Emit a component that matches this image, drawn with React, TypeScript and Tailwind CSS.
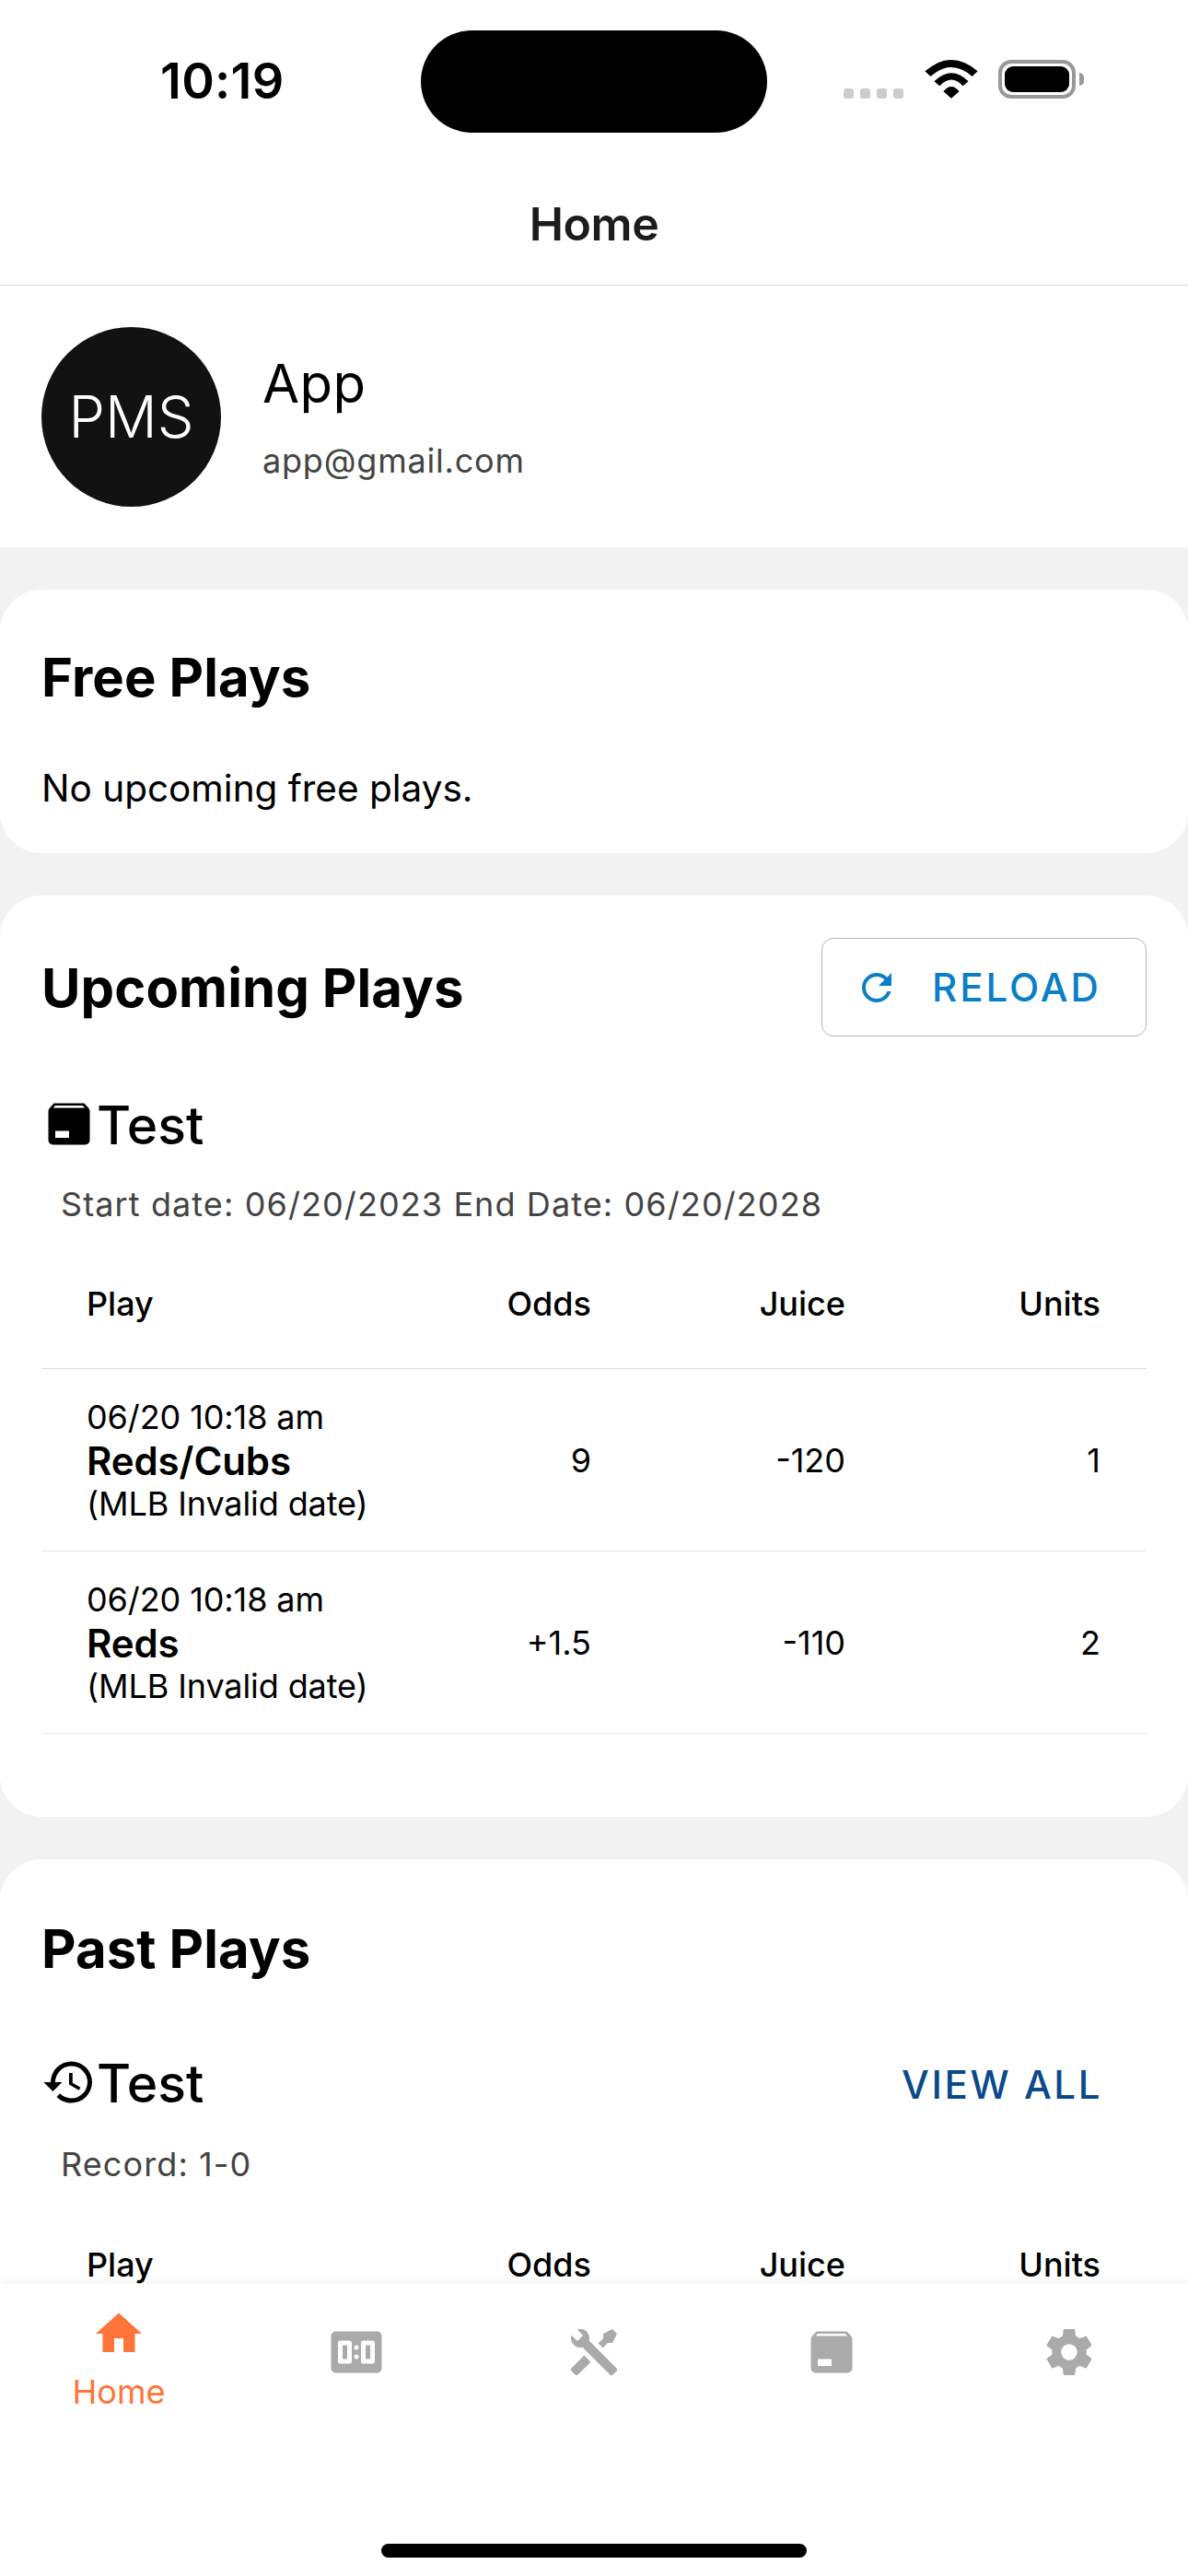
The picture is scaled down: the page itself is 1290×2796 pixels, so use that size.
import type { ReactNode } from 'react'

const FONT = "font-['Inter','Liberation_Sans',sans-serif]"

const PACKAGE_PATH =
  'M5.12,5H18.87L17.93,4H5.93L5.12,5M20.54,5.23C20.83,5.57 21,6 21,6.5V19A2,2 0 0,1 19,21H5A2,2 0 0,1 3,19V6.5C3,6 3.17,5.57 3.46,5.23L4.84,3.55C5.12,3.21 5.53,3 6,3H18C18.47,3 18.88,3.21 19.15,3.55L20.54,5.23M6,18H12V15H6V18Z'
const HISTORY_PATH =
  'M13.5,8H12V13L16.28,15.54L17,14.33L13.5,12.25V8M13,3A9,9 0 0,0 4,12H1L4.96,16.03L9,12H6A7,7 0 0,1 13,5A7,7 0 0,1 20,12A7,7 0 0,1 13,19C11.07,19 9.32,18.21 8.06,16.94L6.64,18.36C8.27,20 10.5,21 13,21A9,9 0 0,0 22,12A9,9 0 0,0 13,3'
const TOOLS_PATH =
  'M21.71 20.29L20.29 21.71A1 1 0 0 1 18.88 21.71L7 9.85A3.81 3.81 0 0 1 6 10A4 4 0 0 1 2.22 4.7L4.76 7.24L5.29 6.71L6.71 5.29L7.24 4.76L4.7 2.22A4 4 0 0 1 10 6A3.81 3.81 0 0 1 9.85 7L21.71 18.88A1 1 0 0 1 21.71 20.29M2.29 18.88A1 1 0 0 0 2.29 20.29L3.71 21.71A1 1 0 0 0 5.12 21.71L10.59 16.25L7.76 13.42M20 2L16 4V6L13.83 8.17L15.83 10.17L18 8H20L22 4Z'
const COG_PATH =
  'M12,15.5A3.5,3.5 0 0,1 8.5,12A3.5,3.5 0 0,1 12,8.5A3.5,3.5 0 0,1 15.5,12A3.5,3.5 0 0,1 12,15.5M19.43,12.97C19.47,12.65 19.5,12.33 19.5,12C19.5,11.67 19.47,11.34 19.43,11L21.54,9.37C21.73,9.22 21.78,8.95 21.66,8.73L19.66,5.27C19.54,5.05 19.27,4.96 19.05,5.05L16.56,6.05C16.04,5.66 15.5,5.32 14.87,5.07L14.5,2.42C14.46,2.18 14.25,2 14,2H10C9.75,2 9.54,2.18 9.5,2.42L9.13,5.07C8.5,5.32 7.96,5.66 7.44,6.05L4.95,5.05C4.73,4.96 4.46,5.05 4.34,5.27L2.34,8.73C2.21,8.95 2.27,9.22 2.46,9.37L4.57,11C4.53,11.34 4.5,11.67 4.5,12C4.5,12.33 4.53,12.65 4.57,12.97L2.46,14.63C2.27,14.78 2.21,15.05 2.34,15.27L4.34,18.73C4.46,18.95 4.73,19.03 4.95,18.95L7.44,17.94C7.96,18.34 8.5,18.68 9.13,18.93L9.5,21.58C9.54,21.82 9.75,22 10,22H14C14.25,22 14.46,21.82 14.5,21.58L14.87,18.93C15.5,18.67 16.04,18.34 16.56,17.94L19.05,18.95C19.27,19.03 19.54,18.95 19.66,18.73L21.66,15.27C21.78,15.05 21.73,14.78 21.54,14.63L19.43,12.97Z'
const HOME_PATH = 'M10 20v-6h4v6h5v-8h3L12 3 2 12h3v8z'
const RELOAD_PATH =
  'M17.65 6.35C16.2 4.9 14.21 4 12 4c-4.42 0-7.99 3.58-7.99 8s3.57 8 7.99 8c3.73 0 6.84-2.55 7.73-6h-2.08c-.82 2.33-3.04 4-5.65 4-3.31 0-6-2.69-6-6s2.69-6 6-6c1.66 0 3.14.69 4.22 1.78L13 11h7V4l-2.35 2.35z'

function Icon({ d, color, size = 60 }: { d: string; color: string; size?: number }) {
  return (
    <svg width={size} height={size} viewBox="0 0 24 24" className="shrink-0">
      <path d={d} fill={color} fillRule="evenodd" />
    </svg>
  )
}

function ScoreboardIcon() {
  return (
    <svg width={60} height={60} viewBox="0 0 24 24" className="shrink-0">
      <rect x="1" y="3" width="22" height="18" rx="2" fill="#aaaaaa" />
      <path
        d="M5 7H9A1 1 0 0 1 10 8V16A1 1 0 0 1 9 17H5A1 1 0 0 1 4 16V8A1 1 0 0 1 5 7ZM6 9V15H8V9ZM15 7H19A1 1 0 0 1 20 8V16A1 1 0 0 1 19 17H15A1 1 0 0 1 14 16V8A1 1 0 0 1 15 7ZM16 9V15H18V9Z"
        fill="#ffffff"
        fillRule="evenodd"
      />
      <circle cx="12" cy="10" r="1" fill="#ffffff" />
      <circle cx="12" cy="14" r="1" fill="#ffffff" />
    </svg>
  )
}

function StatusBar() {
  return (
    <div className="flex h-[177px]">
      <div className="w-[457px] pl-[174px] pt-[56px]">
        <span className="block text-[54px] leading-[64px] font-semibold tracking-[0.3px] text-black">10:19</span>
      </div>
      <div className="mt-[33px] h-[111px] w-[376px] rounded-full bg-black" />
      <div className="ml-[83px] flex h-[42px] mt-[65px] items-end">
        <div className="flex gap-[7px]">
          {[0, 1, 2, 3].map(i => (
            <div key={i} className="h-[11px] w-[11px] rounded-[3px] bg-[#cccccc]" />
          ))}
        </div>
        <svg width="58" height="42" viewBox="0 0 57.2 42" className="ml-[23px]">
          <path d="M0 12.3Q28.6 -12.3 57.2 12.3L51.2 18Q28.6 -2 6 18Z" fill="#000" />
          <path d="M10 23.3Q28.6 5.3 47.2 23.3L41.2 28.3Q28.6 14.9 16 28.3Z" fill="#000" />
          <path d="M20 34.3Q28.6 23.7 37.2 34.3L28.6 41.7Z" fill="#000" />
        </svg>
        <div className="ml-[22px] h-[42px] w-[84px] rounded-[14px] border-[4px] border-[#999999] p-[3px]">
          <div className="h-full w-full rounded-[9px] bg-black" />
        </div>
        <div className="mb-[14px] ml-[4px] h-[14px] w-[5px] rounded-r-full bg-[#999999]" />
      </div>
    </div>
  )
}

function Card({ className, children }: { className: string; children: ReactNode }) {
  return <section className={`rounded-[45px] bg-white px-[45px] ${className}`}>{children}</section>
}

function Heading({ children }: { children: ReactNode }) {
  return <h2 className="text-[58px] leading-[70px] font-bold tracking-[0.1px] text-black">{children}</h2>
}

function GroupTitle({ d, children }: { d: string; children: ReactNode }) {
  return (
    <div className="flex h-[60px] items-center">
      <Icon d={d} color="#000000" />
      <span className="pt-[4px] text-[57px] leading-[56px] font-medium text-black">{children}</span>
    </div>
  )
}

const ROW = 'grid grid-cols-[348px_200px_276px_277px] pl-[49px] pr-[50px]'

function TableHead() {
  return (
    <div className={`${ROW} h-[142px] items-center border-b border-[#dddddd] text-[36px] font-medium text-black`}>
      <span>Play</span>
      <span className="text-right">Odds</span>
      <span className="text-right">Juice</span>
      <span className="text-right">Units</span>
    </div>
  )
}

function PlayRow({ name, odds, juice, units }: { name: string; odds: string; juice: string; units: string }) {
  return (
    <div className={`${ROW} h-[198px] items-center border-b border-[#e6e6e6] text-[36px] text-black`}>
      <div className="pt-[2px] leading-[47px] tracking-[-0.1px]">
        <div>06/20 10:18 am</div>
        <div className="text-[42px] font-semibold">{name}</div>
        <div>(MLB Invalid date)</div>
      </div>
      <span className="text-right">{odds}</span>
      <span className="text-right">{juice}</span>
      <span className="text-right">{units}</span>
    </div>
  )
}

function TabBar() {
  return (
    <nav className="relative z-10 flex h-[317px] flex-col bg-white shadow-[0_-3px_8px_rgba(0,0,0,0.05)]">
      <div className="grid grid-cols-5">
        <div className="flex flex-col items-center pt-[23.5px]">
          <Icon d={HOME_PATH} color="#ff7439" />
          <span className="mt-[11px] text-[36px] leading-[44px] text-[#ff7439]">Home</span>
        </div>
        <div className="flex justify-center pt-[44px]">
          <ScoreboardIcon />
        </div>
        <div className="flex justify-center pt-[44px]">
          <Icon d={TOOLS_PATH} color="#aaaaaa" />
        </div>
        <div className="flex justify-center pt-[44px]">
          <Icon d={PACKAGE_PATH} color="#aaaaaa" />
        </div>
        <div className="flex justify-center pt-[44px]">
          <Icon d={COG_PATH} color="#aaaaaa" />
        </div>
      </div>
      <div className="mx-auto mt-auto mb-[20px] h-[15px] w-[462px] rounded-full bg-black" />
    </nav>
  )
}

export default function App() {
  return (
    <div className={`${FONT} flex h-[2796px] w-[1290px] flex-col overflow-hidden bg-[#f2f2f2]`}>
      <main className="min-h-0 flex-1 overflow-hidden">
        <header className="border-b border-[#dcdcdc] bg-white">
          <StatusBar />
          <div className="flex h-[132px] items-center justify-center text-[50px] font-semibold tracking-[-0.4px] text-[#1c1c1e]">Home</div>
        </header>

        <div className="flex h-[284px] items-center gap-[45px] bg-white px-[45px]">
          <div className="flex h-[195px] w-[195px] items-center justify-center rounded-full bg-[#121212] text-[63px] font-light text-white">
            PMS
          </div>
          <div>
            <div className="text-[58px] leading-[70px] tracking-[0.5px] text-black">App</div>
            <div className="mt-[26px] text-[36px] leading-[46px] tracking-[0.8px] text-[#444444]">app@gmail.com</div>
          </div>
        </div>

        <div className="mt-[46px] flex flex-col gap-[46px]">
          <Card className="h-[286px] pt-[60px]">
            <Heading>Free Plays</Heading>
            <p className="mt-[61px] text-[40.5px] leading-[50px] text-black">No upcoming free plays.</p>
          </Card>

          <Card className="h-[1000px] pt-[46px]">
            <div className="flex items-center justify-between">
              <Heading>Upcoming Plays</Heading>
              <button className="flex h-[107px] w-[353px] items-center rounded-[13px] border border-[#b5b5b5] pl-[35px] text-[42px] font-medium tracking-[3px] text-[#0a7ec6]">
                <Icon d={RELOAD_PATH} color="#0a7ec6" size={48} />
                <span className="ml-[36px]">RELOAD</span>
              </button>
            </div>
            <div className="mt-[65px]">
              <GroupTitle d={PACKAGE_PATH}>Test</GroupTitle>
            </div>
            <p className="mt-[33px] pl-[21px] text-[36px] leading-[48px] tracking-[1.1px] text-[#444444]">
              Start date: 06/20/2023 End Date: 06/20/2028
            </p>
            <div className="mt-[13px]">
              <TableHead />
              <PlayRow name="Reds/Cubs" odds="9" juice="-120" units="1" />
              <PlayRow name="Reds" odds="+1.5" juice="-110" units="2" />
            </div>
          </Card>

          <Card className="h-[800px] pt-[62px]">
            <Heading>Past Plays</Heading>
            <div className="mt-[80px] flex items-center justify-between pr-[48px]">
              <GroupTitle d={HISTORY_PATH}>Test</GroupTitle>
              <span className="pt-[6px] text-[42px] leading-[50px] font-medium tracking-[2.6px] text-[#0a4a8c]">VIEW ALL</span>
            </div>
            <p className="mt-[35px] pl-[21px] text-[36px] leading-[48px] tracking-[1.1px] text-[#444444]">Record: 1-0</p>
            <div className="mt-[14px]">
              <TableHead />
            </div>
          </Card>
        </div>
      </main>
      <TabBar />
    </div>
  )
}
